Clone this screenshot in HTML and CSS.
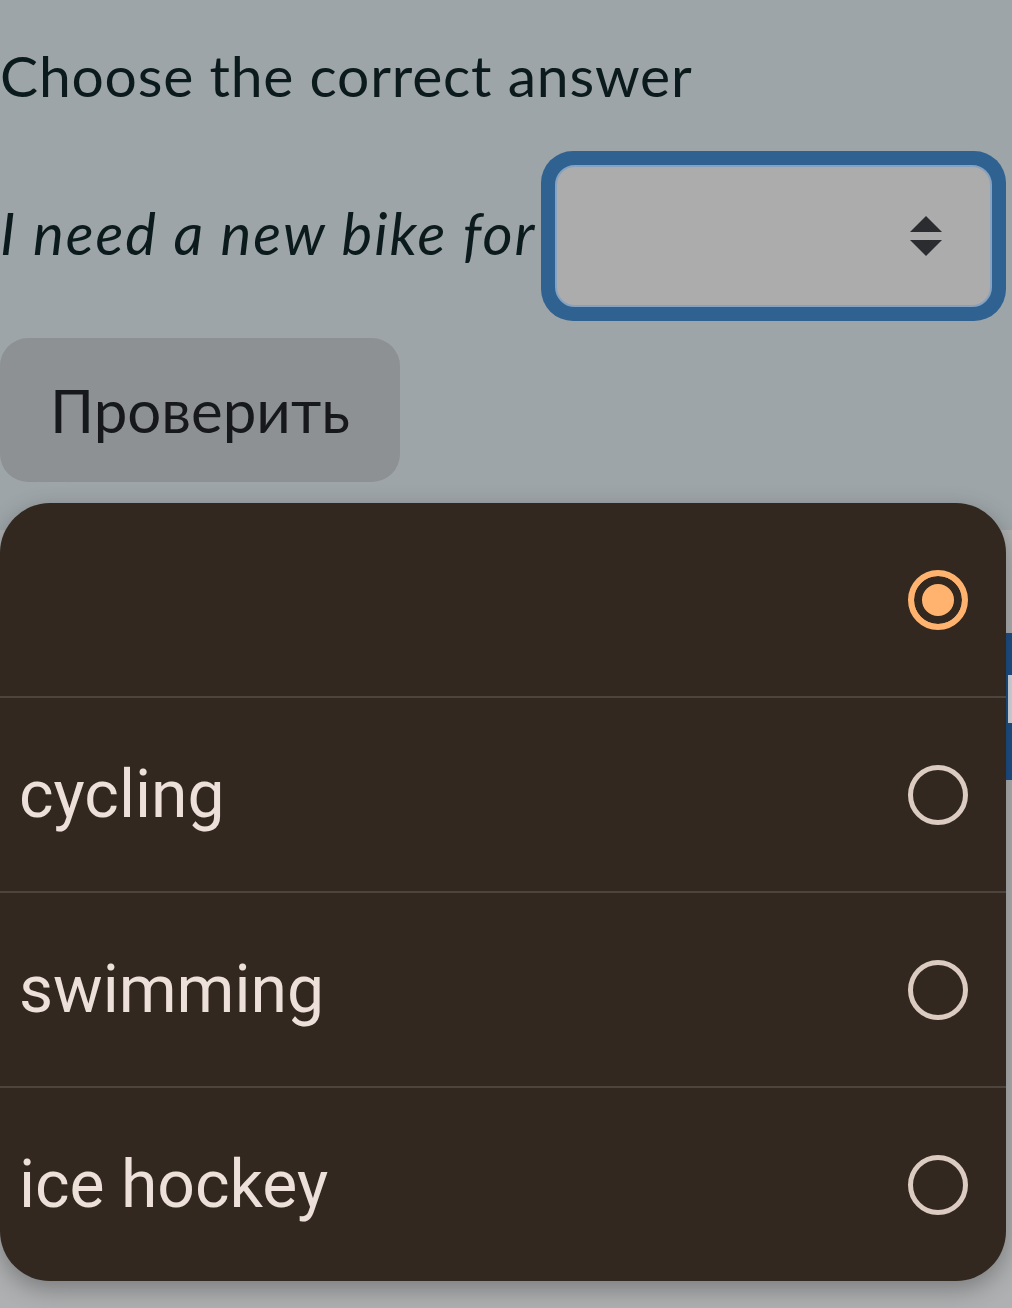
FILE: index.html
```html
<!DOCTYPE html>
<html>
<head>
    <title>Choose the correct answer</title>
    <link rel="stylesheet" href="styles.css">
</head>
<body>
    <div class="page">
        <h1 class="title">Choose the correct answer</h1>
        <div class="question">
            <span class="sentence">I need a new bike for</span>
            <div class="select-ring">
                <div class="select">
                    <span class="arrows">
                        <span class="arrow-up"></span>
                        <span class="arrow-down"></span>
                    </span>
                </div>
            </div>
        </div>
        <button class="check">Проверить</button>
        <div class="panel">
            <div class="bar"><div class="bar-field"></div></div>
        </div>
    </div>

    <!-- native picker opened over the page -->
    <div class="picker">
        <div class="option">
            <span class="label"></span>
            <span class="radio checked"></span>
        </div>
        <div class="option">
            <span class="label">cycling</span>
            <span class="radio"></span>
        </div>
        <div class="option">
            <span class="label">swimming</span>
            <span class="radio"></span>
        </div>
        <div class="option">
            <span class="label">ice hockey</span>
            <span class="radio"></span>
        </div>
    </div>
</body>
</html>
```

FILE: styles.css
```css
html, body {
    margin: 0;
    padding: 0;
}
body {
    width: 1012px;
    height: 1308px;
    overflow: hidden;
    background-color: #9ea5a8;
    font-family: Lato, "Open Sans", sans-serif;
    color: #0b1a1c;
    position: relative;
}
.page {
    display: flex;
    flex-direction: column;
    align-items: flex-start;
}
.title {
    margin: 42px 0 0 0;
    font-size: 57px;
    font-weight: 400;
    line-height: 67px;
    letter-spacing: 0.8px;
}
.question {
    margin-top: 42px;
    display: flex;
    align-items: center;
    width: 100%;
}
.sentence {
    font-style: italic;
    font-size: 58px;
    line-height: 70px;
    letter-spacing: 2px;
    width: 541px;
    padding-bottom: 6px;
    white-space: nowrap;
}
.select-ring {
    box-sizing: border-box;
    width: 465px;
    height: 170px;
    padding: 14px;
    border-radius: 32px;
    background-color: #2f6291;
}
.select {
    box-sizing: border-box;
    height: 100%;
    border: 2px solid #86a2c1;
    border-radius: 20px;
    background-color: #acacac;
    display: flex;
    align-items: center;
    justify-content: flex-end;
    padding-right: 48px;
}
.arrows {
    display: flex;
    flex-direction: column;
    gap: 8px;
}
.arrow-up, .arrow-down {
    width: 0;
    height: 0;
    border-left: 16px solid transparent;
    border-right: 16px solid transparent;
}
.arrow-up {
    border-bottom: 16px solid #2a2c30;
}
.arrow-down {
    border-top: 16px solid #2a2c30;
}
.check {
    margin-top: 17px;
    width: 400px;
    height: 144px;
    border: none;
    border-radius: 28px;
    background-color: #8e9194;
    color: #16181b;
    font-family: Lato, "Open Sans", sans-serif;
    font-size: 60px;
    padding: 0;
}
.panel {
    margin-top: 48px;
    width: 100%;
    height: 778px;
    background-color: #aeb0b1;
    padding-top: 103px;
    box-sizing: border-box;
}
.bar {
    box-sizing: border-box;
    height: 147px;
    background-color: #1e4f87;
    padding: 42px 0 0 1008px;
}
.bar-field {
    height: 48px;
    background-color: #d8dde4;
}
.picker {
    position: absolute;
    top: 503px;
    left: 0;
    width: 1006px;
    background-color: #32281f;
    border-radius: 50px;
    box-shadow: 0 8px 24px rgba(0, 0, 0, 0.3);
    overflow: hidden;
    font-family: Roboto, sans-serif;
}
.option {
    height: 193px;
    display: flex;
    align-items: center;
    justify-content: space-between;
    padding: 0 38px 0 19px;
}
.option + .option {
    border-top: 2px solid #4d443d;
}
.label {
    font-size: 66px;
    color: #ede0da;
}
.radio {
    box-sizing: border-box;
    width: 60px;
    height: 60px;
    border-radius: 50%;
    border: 5px solid #dccbc0;
}
.radio.checked {
    border: 6px solid #ffb36f;
    background-color: #ffb36f;
    box-shadow: inset 0 0 0 8px #32281f;
}
```
